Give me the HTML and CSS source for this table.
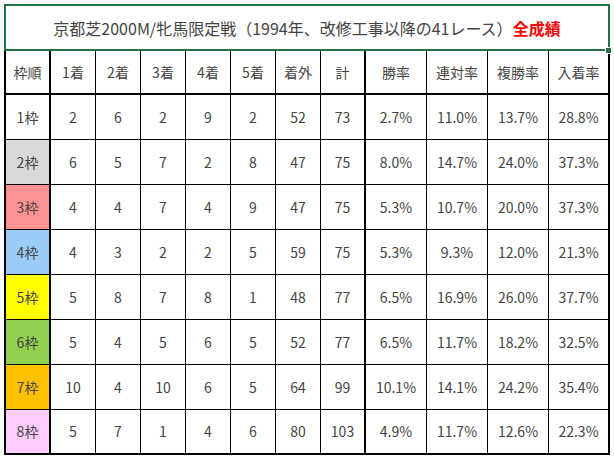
FILE: index.html
```html
<!DOCTYPE html>
<html lang="ja">
<head>
<meta charset="utf-8">
<link rel="stylesheet" href="styles.css">
</head>
<body>
<div class="sheet">
  <div class="title">京都芝2000M/牝馬限定戦（1994年、改修工事以降の41レース）<span class="em">全成績</span><span class="handle"></span></div>
  <div class="grid">
    <div class="c h first">枠順</div><div class="c h">1着</div><div class="c h">2着</div><div class="c h">3着</div><div class="c h">4着</div><div class="c h">5着</div><div class="c h">着外</div><div class="c h sum">計</div><div class="c h">勝率</div><div class="c h">連対率</div><div class="c h">複勝率</div><div class="c h last">入着率</div>

    <div class="c first w1">1枠</div><div class="c">2</div><div class="c">6</div><div class="c">2</div><div class="c">9</div><div class="c">2</div><div class="c">52</div><div class="c sum">73</div><div class="c">2.7%</div><div class="c">11.0%</div><div class="c">13.7%</div><div class="c last">28.8%</div>

    <div class="c first w2">2枠</div><div class="c">6</div><div class="c">5</div><div class="c">7</div><div class="c">2</div><div class="c">8</div><div class="c">47</div><div class="c sum">75</div><div class="c">8.0%</div><div class="c">14.7%</div><div class="c">24.0%</div><div class="c last">37.3%</div>

    <div class="c first w3">3枠</div><div class="c">4</div><div class="c">4</div><div class="c">7</div><div class="c">4</div><div class="c">9</div><div class="c">47</div><div class="c sum">75</div><div class="c">5.3%</div><div class="c">10.7%</div><div class="c">20.0%</div><div class="c last">37.3%</div>

    <div class="c first w4">4枠</div><div class="c">4</div><div class="c">3</div><div class="c">2</div><div class="c">2</div><div class="c">5</div><div class="c">59</div><div class="c sum">75</div><div class="c">5.3%</div><div class="c">9.3%</div><div class="c">12.0%</div><div class="c last">21.3%</div>

    <div class="c first w5">5枠</div><div class="c">5</div><div class="c">8</div><div class="c">7</div><div class="c">8</div><div class="c">1</div><div class="c">48</div><div class="c sum">77</div><div class="c">6.5%</div><div class="c">16.9%</div><div class="c">26.0%</div><div class="c last">37.7%</div>

    <div class="c first w6">6枠</div><div class="c">5</div><div class="c">4</div><div class="c">5</div><div class="c">6</div><div class="c">5</div><div class="c">52</div><div class="c sum">77</div><div class="c">6.5%</div><div class="c">11.7%</div><div class="c">18.2%</div><div class="c last">32.5%</div>

    <div class="c first w7">7枠</div><div class="c">10</div><div class="c">4</div><div class="c">10</div><div class="c">6</div><div class="c">5</div><div class="c">64</div><div class="c sum">99</div><div class="c">10.1%</div><div class="c">14.1%</div><div class="c">24.2%</div><div class="c last">35.4%</div>

    <div class="c first w8 b">8枠</div><div class="c b">5</div><div class="c b">7</div><div class="c b">1</div><div class="c b">4</div><div class="c b">6</div><div class="c b">80</div><div class="c sum b">103</div><div class="c b">4.9%</div><div class="c b">11.7%</div><div class="c b">12.6%</div><div class="c last b">22.3%</div>
  </div>
</div>
</body>
</html>
```

FILE: styles.css
```css
* { box-sizing: border-box; }
html, body { margin: 0; padding: 0; background: #ffffff; }
body {
  font-family: "Noto Sans CJK JP", "Noto Sans", sans-serif;
  color: #444444;
}
.sheet {
  width: 606px;
  margin: 4px 0 0 4px;
}
.title {
  position: relative;
  height: 47px;
  border: 2px solid #217346;
  display: flex;
  align-items: center;
  justify-content: center;
  font-size: 16px;
  padding-top: 1px;
}
.title .em {
  color: #ff0000;
  font-weight: 700;
}
.handle {
  position: absolute;
  right: -3px;
  bottom: -4px;
  width: 5px;
  height: 5px;
  background: #217346;
  outline: 1px solid #ffffff;
}
.grid {
  display: grid;
  grid-template-columns: 47px repeat(7, 45px) repeat(4, 61px);
  grid-template-rows: 44px repeat(8, 45px);
}
.c {
  display: flex;
  align-items: center;
  justify-content: center;
  font-size: 14px;
  border-right: 1px solid #000;
  border-bottom: 1px solid #000;
  padding-bottom: 1px;
}
.c.h { border-bottom: 2px solid #000; }
.c.first { border-left: 2px solid #000; border-right: 2px solid #000; }
.c.sum { border-right: 2px solid #000; }
.c.last { border-right: 2px solid #000; }
.c.b { border-bottom: 2px solid #000; }
.w1 { background: #ffffff; }
.w2 { background: #d9d9d9; }
.w3 { background: #ff9393; }
.w4 { background: #9bcbf7; }
.w5 { background: #ffff00; }
.w6 { background: #92d050; }
.w7 { background: #ffc000; }
.w8 { background: #ffccff; }
```
